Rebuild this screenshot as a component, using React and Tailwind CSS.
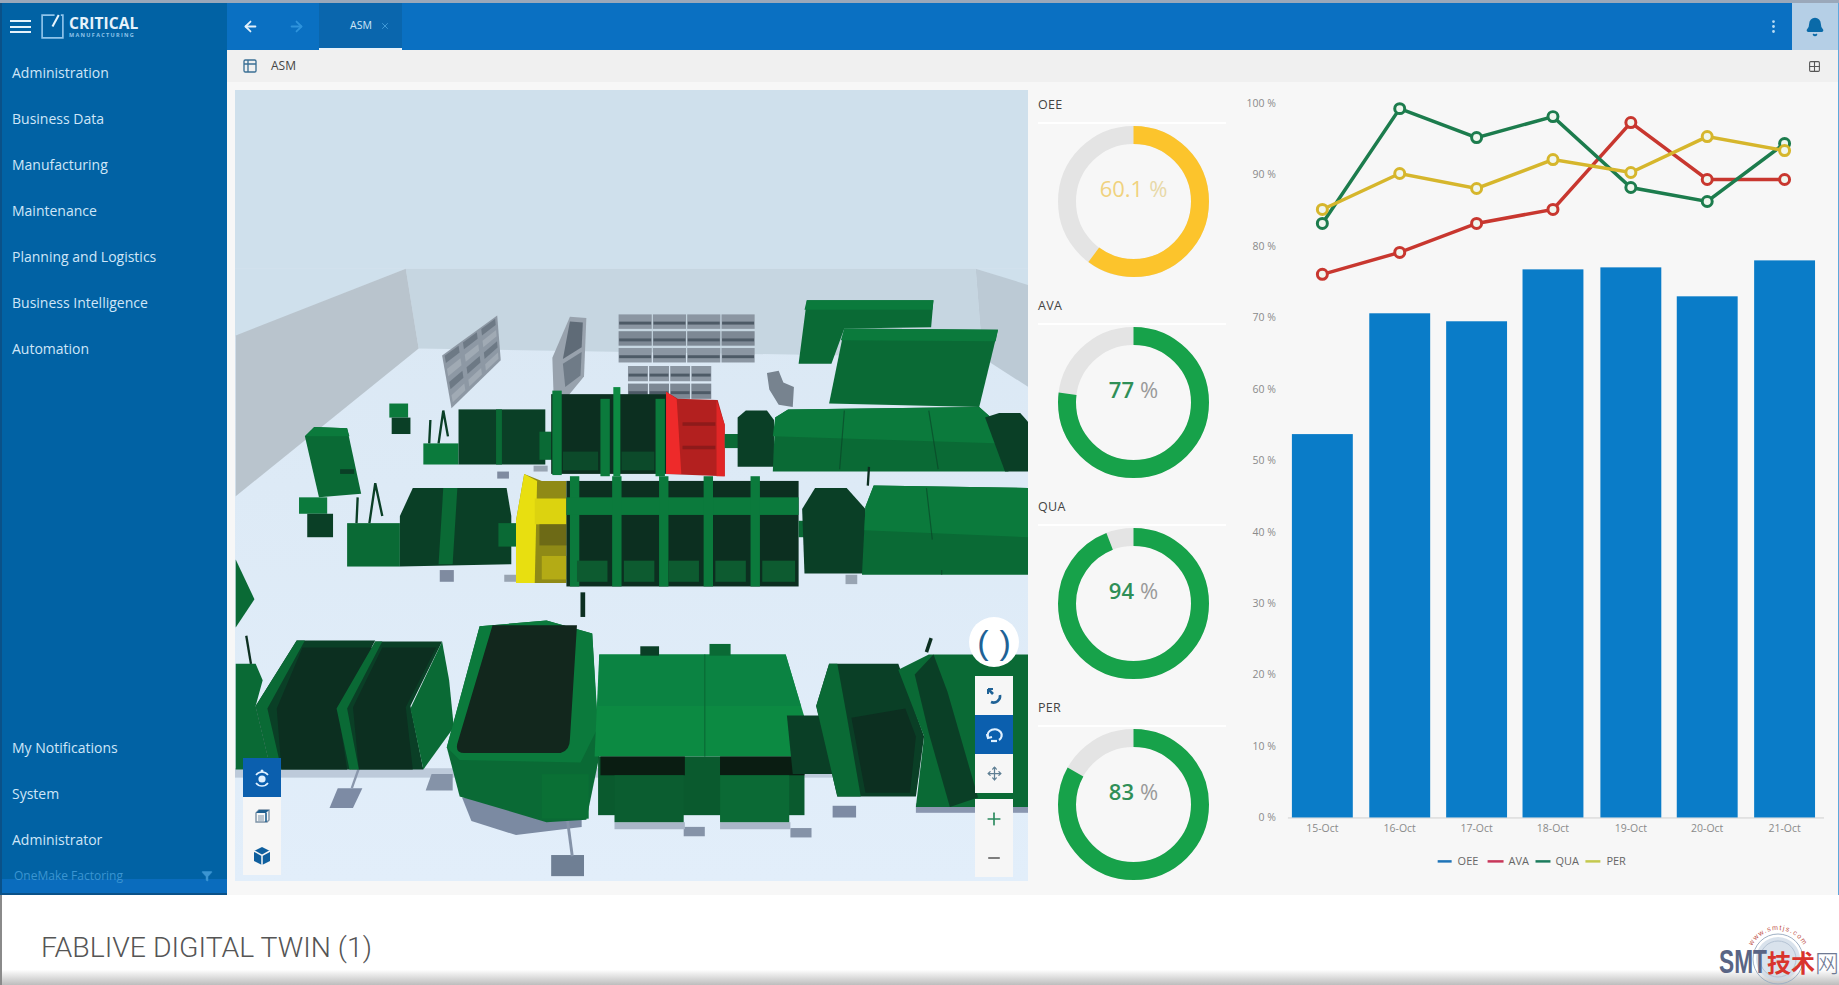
import React from "react";
import { ArrowLeft, ArrowRight, X, EllipsisVertical, Bell, Move, Plus, Minus, Filter, Table2, Grid2x2 } from "lucide-react";

const poly = (pts) => pts.map((p) => p.join(",")).join(" ");
const P = ({ p, f, o }) => <polygon points={poly(p)} fill={f} opacity={o} />;
const R = ({ x, y, w, h, f, o }) => <rect x={x} y={y} width={w} height={h} fill={f} opacity={o} />;

const G1 = "#0b7a3c";
const G2 = "#0a6a35";
const G3 = "#0c8a42";
const D1 = "#0a3f26";
const D2 = "#0c2f20";
const D3 = "#12271d";

function Shelf({ x, y, w, h, cols, rows }) {
  const items = [];
  for (let c = 0; c < cols; c++) {
    for (let r = 0; r < rows; r++) {
      items.push(
        <rect key={c + "-" + r} x={x + c * (w / cols) + 0.5} y={y + r * (h / rows) + 1} width={w / cols - 1} height={h / rows - 2} fill={r % 2 ? "#7d8894" : "#8b96a2"} />
      );
      items.push(<rect key={"d" + c + "-" + r} x={x + c * (w / cols) + 1} y={y + r * (h / rows) + h / rows / 2} width={w / cols - 2} height={2.5} fill="#4d5a66" />);
    }
  }
  return <g>{items}</g>;
}

function SkewShelf({ q, cols, rows }) {
  const [tl, tr, br, bl] = q;
  const at = (u, v) => {
    const tx = tl[0] + (tr[0] - tl[0]) * u;
    const ty = tl[1] + (tr[1] - tl[1]) * u;
    const bx = bl[0] + (br[0] - bl[0]) * u;
    const by = bl[1] + (br[1] - bl[1]) * u;
    return [tx + (bx - tx) * v, ty + (by - ty) * v];
  };
  const cells = [];
  for (let c = 0; c < cols; c++) {
    for (let r = 0; r < rows; r++) {
      const u0 = (c + 0.12) / cols;
      const u1 = (c + 0.88) / cols;
      const v0 = (r + 0.15) / rows;
      const v1 = (r + 0.7) / rows;
      cells.push(<P key={c + "-" + r} p={[at(u0, v0), at(u1, v0), at(u1, v1), at(u0, v1)]} f={r % 2 ? "#a0aab4" : "#6d7985"} />);
    }
  }
  return (
    <g>
      <P p={q} f="#8d98a4" />
      {cells}
    </g>
  );
}

function Scene() {
  return (
    <svg viewBox="200.4 76.7 676.2 674.4" className="block w-full h-full">
      <defs>
        <linearGradient id="floor" x1="0" y1="0" x2="0" y2="1">
          <stop offset="0" stopColor="#d8e6f2" />
          <stop offset="1" stopColor="#e2eefa" />
        </linearGradient>
      </defs>
      <R x={200} y={76} w={678} h={676} f="url(#floor)" />
      <R x={200} y={76} w={678} h={153} f="#cfe0ec" />
      <P p={[[200, 229], [346, 229], [200, 287]]} f="#cfe0ec" />
      <P p={[[832, 229], [878, 229], [878, 244]]} f="#cfe0ec" />
      <P p={[[346, 229], [832, 229], [838, 305], [357, 297]]} f="#c6d6e1" />
      <P p={[[201, 286], [346, 229], [357, 297], [201, 423]]} f="#b9c4cd" />
      <P p={[[832, 229], [877, 243], [877, 330], [838, 305]]} f="#bccad5" />

      <SkewShelf q={[[377, 303], [424, 269], [427, 307], [385, 348]]} cols={3} rows={4} />
      <P p={[[471, 305], [486, 270], [500, 271], [498, 321], [484, 338], [472, 335]]} f="#98a2ad" />
      <P p={[[486, 274], [497, 275], [496, 296], [480, 306]]} f="#5f6b77" />
      <P p={[[480, 310], [496, 300], [495, 320], [482, 330]]} f="#6f7b87" />
      <Shelf x={527} y={267} w={117} h={43} cols={4} rows={3} />
      <Shelf x={535} y={311} w={72} h={30} cols={4} rows={2} />
      <P p={[[654, 318], [664, 316], [668, 326], [677, 330], [676, 347], [664, 345], [656, 332]]} f="#77838f" />

      <P p={[[688, 256], [796, 256], [794, 279], [720, 280], [709, 310], [681, 310]]} f={G2} />
      <P p={[[688, 256], [796, 256], [795, 264], [686, 264]]} f={G1} />
      <P p={[[720, 280], [851, 281], [835, 347], [707, 344]]} f={G2} />
      <P p={[[720, 280], [851, 281], [849, 291], [717, 290]]} f={G1} />

      <P p={[[260, 372], [268, 364], [296, 365], [308, 421], [272, 424]]} f={G2} />
      <P p={[[260, 372], [268, 364], [296, 365], [298, 372]]} f={G1} />
      <R x={290} y={400} w={12} h={4} f={D1} />

      <R x={332} y={344} w={16} h={12} f={G1} />
      <R x={334} y={356} w={16} h={14} f={D1} />

      {/* first row */}
      <R x={361} y={378} w={30} h={18} f={G1} />
      <path d="M366 378 L367 358 M374 378 L378 350 L382 372" stroke={D1} strokeWidth="2" fill="none" />
      <R x={391} y={349} w={74} h={47} f={D1} />
      <R x={423} y={349} w={5} h={47} f={G2} />
      <R x={460} y={368} w={12} h={24} f={G2} />
      <R x={470} y={336} w={98} h={68} f={D2} />
      <R x={471} y={333} w={8} h={72} f={G1} />
      <R x={512} y={340} w={8} h={66} f={G1} />
      <R x={523} y={330} w={6} h={76} f={G3} />
      <R x={559} y={340} w={8} h={66} f={G1} />
      <R x={480} y={385} w={30} h={16} f="#0c4a2a" />
      <R x={530} y={385} w={28} h={16} f="#0c4a2a" />
      <P p={[[568, 334], [578, 340], [612, 341], [618, 362], [618, 406], [568, 404]]} f="#b3201f" />
      <P p={[[568, 334], [577, 340], [581, 404], [568, 404]]} f="#ee2a2a" />
      <P p={[[611, 341], [618, 362], [618, 406], [611, 406]]} f="#e12626" />
      <R x={582} y={360} w={28} h={3} f="#8e1a1a" />
      <R x={582} y={380} w={28} h={3} f="#8e1a1a" />
      <R x={618} y={370} w={14} h={12} f={G2} />
      <P p={[[629, 356], [636, 350], [654, 350], [660, 358], [660, 398], [629, 398]]} f={D1} />
      <P p={[[661, 356], [672, 349], [835, 347], [852, 362], [860, 402], [659, 402]]} f={G2} />
      <P p={[[661, 356], [672, 349], [835, 347], [852, 362], [855, 378], [659, 372]]} f={G1} />
      <path d="M720 350 L716 400 M792 350 L800 400" stroke={D1} strokeWidth="1" opacity=".6" />
      <P p={[[840, 356], [852, 352], [870, 352], [877, 360], [877, 402], [857, 402]]} f={D1} />

      {/* second row */}
      <R x={255} y={424} w={24} h={14} f={G1} />
      <R x={262} y={438} w={22} h={20} f={D1} />
      <R x={296} y={446} w={45} h={37} f={G2} />
      <path d="M304 446 L305 424 M315 446 L320 412 L326 440" stroke={D1} strokeWidth="2" fill="none" />
      <P p={[[341, 440], [352, 416], [432, 416], [436, 440], [436, 481], [341, 483]]} f={D1} />
      <P p={[[378, 416], [390, 416], [386, 481], [374, 481]]} f={G2} />
      <R x={425} y={446} w={16} h={20} f={G2} />
      <P p={[[440, 444], [447, 404], [462, 410], [483, 410], [483, 497], [440, 497]]} f="#8f8a16" />
      <P p={[[440, 444], [447, 404], [458, 410], [456, 497], [440, 497]]} f="#e8df10" />
      <R x={456} y={425} w={27} h={22} f="#dcd30f" />
      <R x={460} y={447} w={23} h={18} f="#6d6a16" />
      <R x={462} y={474} w={21} h={20} f="#b4ab15" />
      <R x={483} y={410} w={198} h={90} f={D2} />
      <R x={486} y={406} w={8} h={94} f={G1} />
      <R x={483} y={424} w={198} h={15} f={G1} />
      {[522, 562, 600, 640].map((x) => (
        <g key={x}>
          <R x={x} y={406} w={8} h={94} f={G1} />
          <R x={x - 30} y={478} w={26} h={18} f="#0d5b30" />
        </g>
      ))}
      <R x={650} y={478} w={28} h={18} f="#0d5b30" />
      <R x={681} y={444} w={6} h={14} f={G2} />
      <P p={[[684, 434], [695, 416], [722, 416], [738, 434], [738, 489], [686, 489]]} f={D1} />
      <P p={[[738, 432], [745, 414], [877, 416], [877, 490], [735, 490]]} f={G2} />
      <P p={[[738, 432], [745, 414], [877, 416], [877, 458], [737, 452]]} f={G1} />
      <path d="M790 416 L795 460 M803 490 L803 486" stroke={D1} strokeWidth="1" opacity=".6" />
      <path d="M740 414 L741 398" stroke={D2} strokeWidth="2" />
      <R x={430} y={490} w={10} h={6} f="#98a4b2" />
      <R x={375} y={486} w={12} h={10} f="#7f8ba0" />
      <R x={721} y={490} w={10} h={8} f="#98a4b2" />
      <R x={455} y={397} w={12} h={5} f="#98a4b2" />
      <R x={424} y={402} w={10} h={6} f="#7f8ba0" />
      <path d="M497 505 L497 526" stroke={D2} strokeWidth="4" />
      <P p={[[201, 477], [217, 511], [201, 535]]} f={G2} />

      {/* front row shadows and pads */}
      <R x={200} y={655} w={678} h={8} f="#9aa8bb" o={0.5} />
      <P p={[[281, 689], [288, 672], [309, 672], [301, 689]]} f="#7d8ba4" />
      <path d="M300 672 L306 655" stroke="#8a97ac" strokeWidth="2" />
      <P p={[[363, 674], [368, 660], [386, 660], [386, 674]]} f="#8593a8" />
      <P p={[[394, 680], [496, 680], [496, 705], [440, 712], [402, 700]]} f="#7b8aa2" />
      <R x={470} y={729} w={28} h={18} f="#6f7f94" />
      <path d="M484 700 L488 730" stroke="#8593a8" strokeWidth="2.5" />
      <R x={583} y={705} w={18} h={8} f="#8593a8" />
      <R x={674} y={706} w={18} h={8} f="#8593a8" />
      <R x={710} y={687} w={20} h={10} f="#7d8ba4" />
      <R x={524} y={701} w={60} h={6} f="#a9b6c8" />
      <R x={614} y={701} w={60} h={6} f="#a9b6c8" />
      <R x={781} y={685} w={96} h={8} f="#8a97b0" />

      {/* front row */}
      <P p={[[201, 566], [218, 566], [224, 580], [218, 602], [231, 656], [201, 656]]} f={G2} />
      <path d="M214 566 L210 542" stroke={D2} strokeWidth="2" />
      <P p={[[218, 602], [253, 546], [320, 546], [290, 602], [300, 656], [231, 656]]} f={D1} />
      <P p={[[236, 604], [258, 552], [318, 552], [288, 604], [296, 656], [240, 656]]} f={D2} />
      <P p={[[218, 602], [253, 546], [260, 546], [228, 604], [240, 656], [231, 656]]} f={G2} />
      <P p={[[290, 602], [320, 547], [377, 547], [350, 602], [361, 656], [300, 656]]} f={D1} />
      <P p={[[301, 603], [326, 552], [372, 552], [346, 603], [352, 656], [306, 656]]} f={D2} />
      <P p={[[287, 604], [320, 547], [326, 547], [296, 604], [306, 656], [298, 656]]} f={G2} />
      <P p={[[350, 604], [377, 547], [383, 580], [387, 620], [361, 656]]} f={G2} />
      <P p={[[381, 637], [409, 534], [466, 529], [505, 540], [511, 645], [500, 699], [466, 701], [392, 679]]} f={G2} />
      <P p={[[381, 637], [409, 534], [466, 529], [505, 540], [510, 620], [495, 650], [392, 648]]} f={G1} />
      <path d="M390 634 Q388 642 396 642 L478 642 Q486 640 486 630 L492 533 L420 533 Z" fill={D3} />
      <R x={462} y={660} w={40} h={38} f="#0a7035" />
      <P p={[[511, 558], [670, 558], [696, 645], [507, 645]]} f={G3} />
      <P p={[[511, 558], [670, 558], [683, 602], [510, 602]]} f="#0b8342" />
      <path d="M601 558 L601 645" stroke="#0a6a35" strokeWidth="1" />
      <R x={546} y={551} w={16} h={8} f={D1} />
      <R x={605} y={549} w={18} h={10} f={G2} />
      <R x={510} y={645} w={176} h={50} f="#0a5a2e" />
      <R x={512} y={645} w={72} h={16} f="#0a1d12" />
      <R x={614} y={645} w={72} h={16} f="#0a1d12" />
      <R x={524} y={661} w={59} h={40} f="#0b5d30" />
      <R x={614} y={661} w={59} h={40} f="#0b6a35" />
      <P p={[[671, 610], [707, 610], [712, 660], [676, 660]]} f={D1} />
      <P p={[[707, 566], [766, 566], [788, 628], [781, 679], [714, 679], [696, 602]]} f={D1} />
      <P p={[[696, 602], [707, 566], [714, 566], [722, 610], [734, 679], [714, 679]]} f={G2} />
      <P p={[[726, 612], [772, 604], [781, 628], [776, 676], [738, 676]]} f={D2} />
      <P p={[[766, 571], [792, 558], [877, 558], [877, 688], [781, 688], [788, 628]]} f={G2} />
      <P p={[[780, 575], [796, 558], [808, 590], [834, 680], [810, 688], [792, 625]]} f={D1} />
      <path d="M790 556 L794 544" stroke={D2} strokeWidth="3" />
    </svg>
  );
}

function Gauge({ label, value, text, color, numCls, pctCls }) {
  const r = 66.5;
  const c = 2 * Math.PI * r;
  return (
    <div className="h-[201px]">
      <div className="h-[20px] leading-[20px] text-[12.5px] text-[#444] tracking-wide">{label}</div>
      <div className="mt-[7px] h-[2px] bg-white" />
      <div className="relative mt-[2px] ml-[20px] w-[151px] h-[151px]">
        <svg viewBox="0 0 151 151" className="block w-full h-full -rotate-90">
          <circle cx="75.5" cy="75.5" r={r} fill="none" stroke="#e4e4e4" strokeWidth="18" />
          <circle cx="75.5" cy="75.5" r={r} fill="none" stroke={color} strokeWidth="18" strokeDasharray={`${(c * value) / 100} ${c}`} />
        </svg>
        <div className="absolute inset-0 flex items-center justify-center pb-[28px] text-[22px] leading-none">
          <span className={numCls}>{text}</span>
          <span className={`ml-[6px] ${pctCls}`}>%</span>
        </div>
      </div>
    </div>
  );
}

const xs = [1322.5, 1400, 1477, 1553.5, 1631.5, 1708, 1785.5];
const days = ["15-Oct", "16-Oct", "17-Oct", "18-Oct", "19-Oct", "20-Oct", "21-Oct"];
const tops = [434, 313, 321, 269, 267, 296, 260];
const lines = [
  { c: "#c8372f", y: [274, 252, 223, 209, 122, 179, 179] },
  { c: "#1c7c4d", y: [223, 108, 137, 116, 187, 201, 143] },
  { c: "#d6b62c", y: [209, 173, 188, 159, 172, 136, 150] },
];
const axisText = { fontFamily: "'Open Sans', sans-serif", fontSize: 10.5, fill: "#8a8a8a" };

function Chart() {
  return (
    <svg viewBox="1234 82 605 813" className="block w-full h-full">
      {[100, 90, 80, 70, 60, 50, 40, 30, 20, 10, 0].map((v, i) => (
        <text key={v} x="1276" y={106 + i * 71.6} textAnchor="end" style={axisText}>{v} %</text>
      ))}
      <line x1="1288" x2="1825" y1="818.5" y2="818.5" stroke="#cfcfcf" />
      {xs.map((x, i) => (
        <rect key={x} x={x - 30.5} y={tops[i]} width="61" height={818 - tops[i]} fill="#0a7cc8" />
      ))}
      {days.map((d, i) => (
        <text key={d} x={xs[i]} y="833" textAnchor="middle" style={axisText}>{d}</text>
      ))}
      {lines.map((l) => (
        <g key={l.c}>
          <polyline points={l.y.map((y, i) => `${xs[i]},${y}`).join(" ")} fill="none" stroke={l.c} strokeWidth="3.5" />
          {l.y.map((y, i) => (
            <circle key={i} cx={xs[i]} cy={y} r="5" fill="#f0f6ee" stroke={l.c} strokeWidth="3" />
          ))}
        </g>
      ))}
      {[
        [1438, 1452, "#1f74b8", "OEE", 1458],
        [1488, 1504, "#c8375a", "AVA", 1509],
        [1536, 1551, "#1c7c5d", "QUA", 1556],
        [1586, 1601, "#c4c94e", "PER", 1607],
      ].map(([a, b, c, t, tx]) => (
        <g key={t}>
          <line x1={a} x2={b} y1="862" y2="862" stroke={c} strokeWidth="2.5" />
          <text x={tx} y="866" style={{ ...axisText, fontSize: 11, fill: "#666" }}>{t}</text>
        </g>
      ))}
    </svg>
  );
}

function Logo() {
  return (
    <div className="flex items-center gap-[4px]">
      <svg width="25" height="27" viewBox="0 0 24 26" fill="none" stroke="#8fc4ea" strokeWidth="1.6">
        <path d="M14 2 H2 V24 H22 V2 H20" />
        <path d="M12 13 L18 2" strokeWidth="2" stroke="#e8f4fc" />
      </svg>
      <div className="flex flex-col">
        <span className="text-[15.5px] leading-[16px] font-bold text-[#e6f2fb] tracking-[0.1px]">CRITICAL</span>
        <span className="text-[5.5px] leading-[8px] font-bold text-[#8fc4ea] tracking-[1.3px]">MANUFACTURING</span>
      </div>
    </div>
  );
}

function NavItem({ children }) {
  return <div className="h-[46px] flex items-center pl-[10px] pb-[1px] text-[14px] text-[#cfe6f8]">{children}</div>;
}

function IconBtn({ active, children }) {
  return (
    <div className={`w-[38px] h-[39px] flex items-center justify-center ${active ? "bg-[#0b5fae] text-[#dff0ff]" : "bg-[#f6f6f6] text-[#2f6f9f]"}`}>
      {children}
    </div>
  );
}

function OrbitIcon() {
  return (
    <svg width="18" height="20" viewBox="0 0 18 20" fill="none" stroke="currentColor" strokeWidth="1.6">
      <circle cx="9" cy="11" r="3.6" fill="currentColor" stroke="none" />
      <path d="M3 7 A7.5 7.5 0 0 1 15 7" />
      <path d="M15 15 A7.5 7.5 0 0 1 3 15" />
      <circle cx="9" cy="3" r="1.5" fill="currentColor" stroke="none" />
    </svg>
  );
}

function CubeFrontIcon() {
  return (
    <svg width="20" height="20" viewBox="0 0 20 20" fill="none">
      <path d="M4 6 L7 3 H17 V13 L15 15 H4 Z" stroke="#7d93a6" strokeWidth="1.4" fill="#f6f6f6" />
      <path d="M4 6 L7 3 H17 L14 6 Z" fill="#1f5f8f" />
      <rect x="6" y="8" width="6" height="6" fill="#b9c6d1" />
      <path d="M14 6 V15" stroke="#1f5f8f" strokeWidth="1.6" />
    </svg>
  );
}

function CubeFillIcon() {
  return (
    <svg width="18" height="20" viewBox="0 0 18 20">
      <path d="M9 1 L17 5 V15 L9 19 L1 15 V5 Z" fill="#0f5f9e" />
      <path d="M1 5 L9 9.5 L17 5 M9 9.5 V19" stroke="#f6f6f6" strokeWidth="1.5" fill="none" />
    </svg>
  );
}

function TumbleIcon() {
  return (
    <svg width="20" height="20" viewBox="0 0 20 20" fill="none" stroke="#1f6296" strokeWidth="2.6">
      <path d="M16 9 A6.5 6.5 0 0 1 7 16" />
      <path d="M4 3 L9 8" />
      <path d="M4 3 L4 8 M4 3 L9 3" strokeWidth="2" />
    </svg>
  );
}

function SpinIcon() {
  return (
    <svg width="20" height="20" viewBox="0 0 20 20" fill="none" stroke="#dff0ff" strokeWidth="2.2">
      <path d="M4 12 A7 6 0 1 1 15 15" />
      <path d="M3 9 L4 13 L8 12" />
      <path d="M13 16 H7" />
    </svg>
  );
}

function Watermark() {
  return (
    <svg viewBox="0 0 125 72" className="absolute right-0 bottom-[0px] w-[125px] h-[72px]">
      <defs>
        <path id="wm-arc" d="M35 46 A29 29 0 0 1 93 46" />
      </defs>
      <circle cx="64" cy="46" r="22" fill="#c9d6e4" opacity=".7" />
      <circle cx="64" cy="46" r="25" fill="none" stroke="#9fb0c4" strokeWidth="1" />
      <circle cx="64" cy="46" r="18" fill="none" stroke="#b5c3d4" strokeWidth="1" />
      <text fontSize="7" fill="#c0524a" letterSpacing="1.2" textAnchor="middle" style={{ fontFamily: "'Liberation Sans', sans-serif" }}>
        <textPath href="#wm-arc" startOffset="50%">www.smtjs.com</textPath>
      </text>
      <text x="5" y="60" textLength="48" lengthAdjust="spacingAndGlyphs" fontSize="33" fontWeight="700" fill="#5a6585" style={{ fontFamily: "'Liberation Sans', sans-serif" }}>SMT</text>
      <text x="53" y="59" fontSize="24" fontWeight="700" fill="#d9342c" style={{ fontFamily: "'Noto Sans CJK SC', sans-serif" }}>技术</text>
      <text x="101" y="59" fontSize="24" fontWeight="300" fill="#6f7a94" style={{ fontFamily: "'Noto Sans CJK SC', sans-serif" }}>网</text>
    </svg>
  );
}

export default function App() {
  return (
    <div className="w-[1839px] h-[985px] overflow-hidden flex flex-col bg-white font-['Open_Sans',sans-serif]">
      <div className="h-[3px] bg-[#9aa8ba]" />
      <div className="h-[892px] flex">
        <aside className="w-[227px] bg-[#0162a4] border-l-2 border-[#0a5188] flex flex-col">
          <div className="h-[47px] flex items-center pl-[8px] gap-[9px]">
            <div className="w-[21px] flex flex-col gap-[3.5px]">
              <div className="h-[2px] bg-[#e6f2fb]" />
              <div className="h-[2px] bg-[#e6f2fb]" />
              <div className="h-[2px] bg-[#e6f2fb]" />
            </div>
            <Logo />
          </div>
          <NavItem>Administration</NavItem>
          <NavItem>Business Data</NavItem>
          <NavItem>Manufacturing</NavItem>
          <NavItem>Maintenance</NavItem>
          <NavItem>Planning and Logistics</NavItem>
          <NavItem>Business Intelligence</NavItem>
          <NavItem>Automation</NavItem>
          <div className="flex-1" />
          <NavItem>My Notifications</NavItem>
          <NavItem>System</NavItem>
          <NavItem>Administrator</NavItem>
          <div className="h-[32px] flex items-center justify-between pl-[12px] pr-[14px] pb-[5px] text-[12px] text-[#3b95d2] border-b-2 border-[#0a5188] bg-gradient-to-b from-[#0162a4] from-[53%] to-[#0a6cbd] to-[53%]">
            <span>OneMake Factoring</span>
            <Filter size={12} fill="#3b95d2" strokeWidth={1} />
          </div>
        </aside>
        <main className="flex-1 flex flex-col min-w-0 border-r border-[#5fa8dc]">
          <header className="h-[47px] bg-[#0a70c2] flex items-center">
            <ArrowLeft className="ml-[15px] text-[#e4f1fb]" size={17} strokeWidth={2.5} />
            <ArrowRight className="ml-[29px] text-[#2e93dc]" size={17} strokeWidth={2.5} />
            <div className="ml-[14px] w-[83px] h-full bg-[#0a66ad] border-b-2 border-[#e8f2fa] flex items-center pl-[31px] gap-[8px] text-[10.5px] text-[#cfe6f8]">
              <span>ASM</span>
              <X size={10} className="text-[#4ba3e0]" />
            </div>
            <div className="flex-1" />
            <EllipsisVertical className="text-[#b9dcf4] mr-[10px]" size={17} />
            <div className="w-[46px] h-full bg-[#b5cfe6] flex items-center justify-center">
              <Bell size={20} fill="#0a6aa8" className="text-[#0a6aa8]" />
            </div>
          </header>
          <div className="h-[32px] bg-[#f0f0f0] flex items-center pl-[15px] text-[12px] text-[#444]">
            <Table2 size={16} className="text-[#3a6f94]" />
            <span className="ml-[13px]">ASM</span>
            <div className="flex-1" />
            <Grid2x2 size={13} className="text-[#555] mr-[17px]" />
          </div>
          <div className="flex-1 flex bg-[#f7f7f7] min-h-0">
            <div className="w-[803px] pl-[8px] pr-[2px] pt-[8px]">
              <div className="relative w-[793px] h-[791px]">
                <Scene />
                <div className="absolute left-[8px] bottom-[6px] flex flex-col">
                  <IconBtn active><OrbitIcon /></IconBtn>
                  <IconBtn><CubeFrontIcon /></IconBtn>
                  <IconBtn><CubeFillIcon /></IconBtn>
                </div>
                <div className="absolute right-[15px] top-[527px] flex flex-col items-center w-[38px]">
                  <div className="w-[50px] h-[50px] rounded-full bg-white text-[#1f6296] flex items-center justify-center text-[34px] leading-none gap-[11px] mb-[9px] font-['Liberation_Sans',sans-serif]">
                    <span>(</span><span>)</span>
                  </div>
                  <IconBtn><TumbleIcon /></IconBtn>
                  <IconBtn active><SpinIcon /></IconBtn>
                  <IconBtn><Move size={15} className="text-[#5f7f94]" /></IconBtn>
                  <div className="h-[6px]" />
                  <IconBtn><Plus size={20} className="text-[#2b8a5e]" /></IconBtn>
                  <IconBtn><Minus size={18} className="text-[#555]" /></IconBtn>
                </div>
              </div>
            </div>
            <div className="w-[204px] pl-[8px] pr-[8px] pt-[13px]">
              <Gauge label="OEE" value={60.1} text="60.1" color="#fcc42c" numCls="text-[#f0d27e]" pctCls="text-[#e8d9a8]" />
              <Gauge label="AVA" value={77} text="77" color="#17a24a" numCls="text-[#2f8f57] font-semibold" pctCls="text-[#9a9a9a]" />
              <Gauge label="QUA" value={94} text="94" color="#17a24a" numCls="text-[#2f8f57] font-semibold" pctCls="text-[#9a9a9a]" />
              <Gauge label="PER" value={83} text="83" color="#17a24a" numCls="text-[#2f8f57] font-semibold" pctCls="text-[#9a9a9a]" />
            </div>
            <div className="flex-1 min-w-0">
              <Chart />
            </div>
          </div>
        </main>
      </div>
      <div className="relative flex-1 border-l-2 border-[#8a8a8a] bg-gradient-to-b from-white from-[83%] to-[#bdbdbd]">
        <div className="pl-[39px] pt-[36px] text-[28.4px] leading-[34px] text-[#555] font-['Roboto',sans-serif] font-light">FABLIVE DIGITAL TWIN (1)</div>
        <Watermark />
      </div>
    </div>
  );
}
